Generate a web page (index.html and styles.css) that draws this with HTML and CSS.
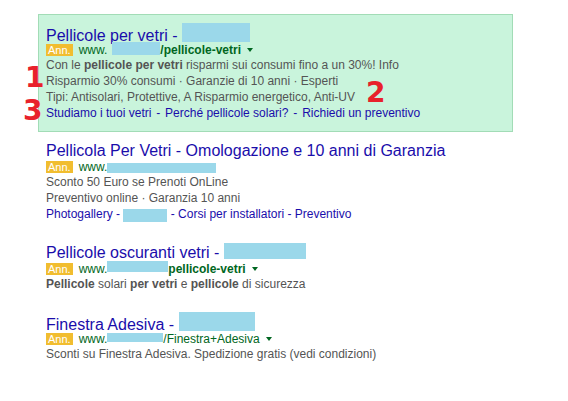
FILE: index.html
```html
<!DOCTYPE html>
<html lang="it">
<head>
<meta charset="utf-8">
<title>Annunci</title>
<link rel="stylesheet" href="styles.css">
</head>
<body>
<div class="page">
  <div class="ad ad-hl">
    <div class="title"><a class="tlink">Pellicole per vetri - </a><span class="redact rt1"></span></div>
    <div class="url"><span class="badge">Ann.</span><span class="www">www.</span><span class="redact ru1"></span><b>/pellicole-vetri</b><span class="caret"></span></div>
    <div class="desc">Con le <b>pellicole per vetri</b> risparmi sui consumi fino a un 30%! Info</div>
    <div class="desc">Risparmio 30% consumi · Garanzie di 10 anni · Esperti</div>
    <div class="desc">Tipi: Antisolari, Protettive, A Risparmio energetico, Anti-UV</div>
    <div class="desc links">Studiamo i tuoi vetri <span class="sep">-</span> Perché pellicole solari? <span class="sep">-</span> Richiedi un preventivo</div>
  </div>

  <div class="ad ad-2">
    <div class="title"><a class="tlink">Pellicola Per Vetri - Omologazione e 10 anni di Garanzia</a></div>
    <div class="url"><span class="badge">Ann.</span><span class="www">www.</span><span class="redact ru2"></span></div>
    <div class="desc">Sconto 50 Euro se Prenoti OnLine</div>
    <div class="desc">Preventivo online · Garanzia 10 anni</div>
    <div class="desc links">Photogallery - <span class="redact rs2"></span> - Corsi per installatori - Preventivo</div>
  </div>

  <div class="ad">
    <div class="title"><a class="tlink">Pellicole oscuranti vetri - </a><span class="redact rt3"></span></div>
    <div class="url"><span class="badge">Ann.</span><span class="www">www.</span><span class="redact ru3"></span><b>pellicole-vetri</b><span class="caret"></span></div>
    <div class="desc"><b>Pellicole</b> solari <b>per vetri</b> e <b>pellicole</b> di sicurezza</div>
  </div>

  <div class="ad">
    <div class="title"><a class="tlink">Finestra Adesiva - </a><span class="redact rt4"></span></div>
    <div class="url"><span class="badge">Ann.</span><span class="www">www.</span><span class="redact ru4"></span>/Finestra+Adesiva<span class="caret"></span></div>
    <div class="desc">Sconti su Finestra Adesiva. Spedizione gratis (vedi condizioni)</div>
  </div>

  <span class="num n1">1</span>
  <span class="num n2">2</span>
  <span class="num n3">3</span>
</div>
</body>
</html>
```
FILE: styles.css
```css
html, body {
  margin: 0;
  padding: 0;
  background: #ffffff;
}
body {
  width: 568px;
  height: 401px;
  overflow: hidden;
  font-family: "Liberation Sans", Arial, sans-serif;
}
.page {
  position: relative;
  padding: 14px 0 0 38px;
}
.ad {
  padding-left: 8px;
  margin-top: 20px;
}
.ad-hl {
  box-sizing: border-box;
  width: 475px;
  margin-top: 0;
  padding: 8px 8px 10px 7px;
  background: #c9f4dc;
  border: 1px solid #a2dcb6;
}
.ad-2 {
  margin-top: 8px;
}
.title {
  font-size: 16px;
  line-height: 21px;
  height: 21px;
  white-space: nowrap;
}
.tlink {
  color: #1a0dab;
}
.url {
  font-size: 12px;
  line-height: 13px;
  height: 13px;
  color: #006621;
  white-space: nowrap;
}
.url b {
  font-weight: bold;
}
.badge {
  display: inline-block;
  vertical-align: top;
  background: #f1bd2f;
  color: #ffffff;
  font-size: 11px;
  line-height: 12px;
  height: 12px;
  padding: 0 2px;
  margin-right: 6px;
}
.caret {
  display: inline-block;
  width: 0;
  height: 0;
  border-left: 3px solid transparent;
  border-right: 3px solid transparent;
  border-top: 4px solid #006621;
  margin-left: 6px;
  vertical-align: 2px;
}
.desc {
  font-size: 12px;
  line-height: 16px;
  height: 16px;
  color: #545454;
  white-space: nowrap;
}
.desc b {
  font-weight: bold;
}
.links {
  color: #1a0dab;
}
.sep {
  margin: 0 1.5px;
}
.redact {
  display: inline-block;
  background: #9bd8ea;
}
.rt1, .rt3, .rt4 {
  vertical-align: baseline;
  margin-bottom: -1px;
}
.rt1 { width: 68px; height: 19px; }
.rt3 { width: 82px; height: 16px; }
.rt4 { width: 76px; height: 19px; }
.ru1, .ru2, .ru3, .ru4 {
  vertical-align: top;
}
.ru1 { width: 48px; height: 13px; margin-left: 5px; margin-top: -2px; }
.ru2 { width: 109px; height: 10px; margin-top: 2px; }
.ru3 { width: 61px; height: 11px; margin-top: -2px; }
.ru4 { width: 56px; height: 9px; }
.rs2 {
  width: 44px;
  height: 13px;
  vertical-align: top;
  margin-top: 3px;
}
.num {
  position: absolute;
  font-family: "DejaVu Sans", sans-serif;
  font-weight: bold;
  font-size: 28px;
  line-height: 28px;
  color: #e8212b;
}
.n1 { left: 25px; top: 64px; }
.n2 { left: 366px; top: 79px; }
.n3 { left: 23px; top: 97px; }
```
